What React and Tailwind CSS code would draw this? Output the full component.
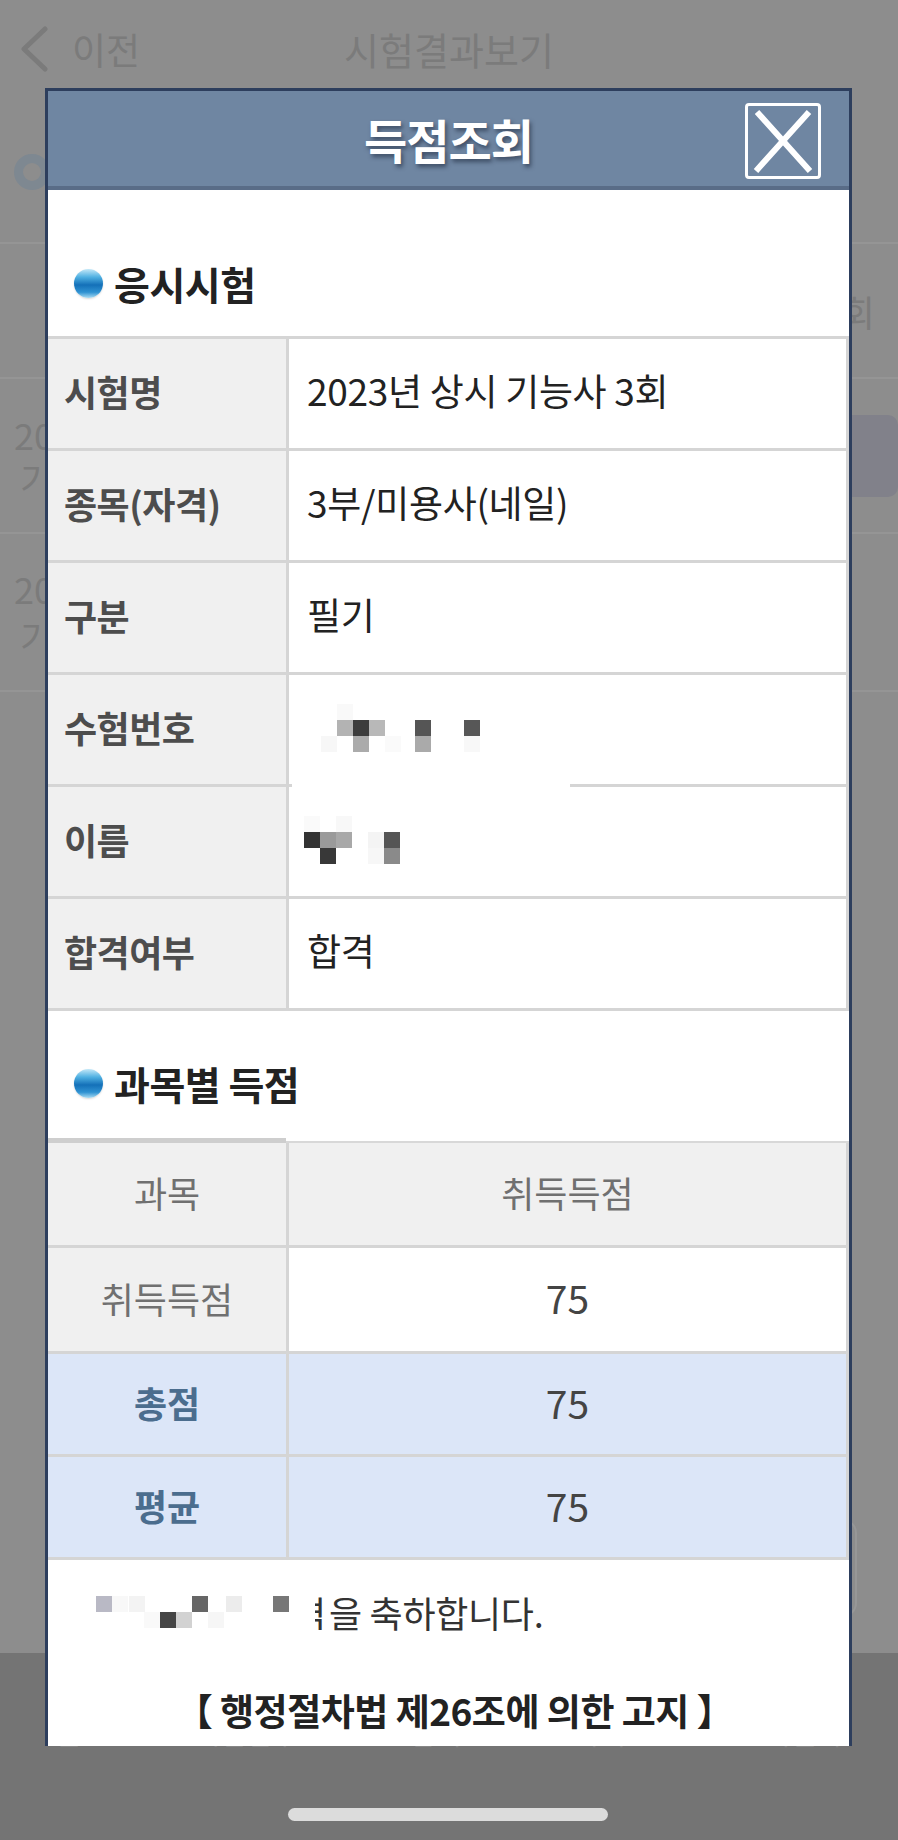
import React from 'react';

const examRows = [
  { label: '시험명', value: '2023년 상시 기능사 3회' },
  { label: '종목(자격)', value: '3부/미용사(네일)' },
  { label: '구분', value: '필기' },
  { label: '수험번호', mosaic: 'number' },
  { label: '이름', mosaic: 'name' },
  { label: '합격여부', value: '합격' },
];

// pixelated (blurred-out) personal info, [x, y, color]
const numberBlocks = [
  [48, 29, '#f9f9f9'], [48, 45, '#b3b3b3'], [64, 45, '#3c3c3c'], [80, 45, '#b8b8b8'],
  [32, 61, '#f7f7f7'], [64, 61, '#ababab'], [126, 45, '#555555'], [126, 61, '#aaaaaa'],
  [175, 45, '#575757'], [175, 61, '#f8f8f8'], [96, 61, '#fafafa'],
];
const nameBlocks = [
  [15, 29, '#fafafa'], [47, 29, '#f8f8f8'], [15, 45, '#333333'], [31, 45, '#9a9a9a'],
  [47, 45, '#a8a8a8'], [31, 61, '#383838'], [79, 45, '#f4f4f4'], [79, 61, '#f7f7f7'],
  [95, 45, '#555555'], [95, 61, '#8a8a8a'],
];
const congratsBlocks = [
  [0, 1, '#b9b9c5'], [16, 1, '#f8f8f8'], [33, 1, '#f3f3f3'], [96, 1, '#666666'],
  [130, 1, '#ececec'], [177, 1, '#777777'], [48, 17, '#f9f9f9'], [64, 17, '#454545'],
  [80, 17, '#d2d2d2'], [112, 17, '#f6f6f6'],
];

const Blocks = ({ blocks }) => (
  <>
    {blocks.map(([x, y, c], i) => (
      <span key={i} className="absolute w-[16px] h-[16px]" style={{ left: x, top: y, background: c }} />
    ))}
  </>
);

const Bullet = () => (
  <span className="w-[29px] h-[29px] rounded-full shrink-0 bg-[linear-gradient(180deg,#c4e8f8_0%,#4fb0e2_28%,#1470b8_55%,#2f92d2_80%,#aadcf3_100%)] shadow-[0_1px_2px_rgba(0,0,0,0.15)]" />
);

const SectionTitle = ({ children }) => (
  <div className="flex items-center gap-[11px] pl-[26px] h-[42px]">
    <Bullet />
    <span className="text-[39px] font-bold text-[#222] leading-none tracking-[-0.5px]">{children}</span>
  </div>
);

const scoreRows = [
  { label: '취득득점', value: '75', h: 'h-[106px]', blue: false },
  { label: '총점', value: '75', h: 'h-[103px]', blue: true },
  { label: '평균', value: '75', h: 'h-[103px]', blue: true },
];

export default function App() {
  return (
    <div className="relative w-[898px] h-[1840px] overflow-hidden bg-[#8d8d8d] font-['Noto_Sans_CJK_KR','Noto_Sans',sans-serif]">
      {/* dimmed page behind the popup */}
      <div className="flex flex-col h-full">
        <div className="grid grid-cols-[1fr_auto_1fr] items-center h-[98px]">
          <div className="flex items-center gap-[24px] pl-[20px]">
            <svg width="28" height="46" viewBox="0 0 28 46" fill="none">
              <path d="M25 3 L4 23 L25 43" stroke="#7b7b7b" strokeWidth="5" strokeLinecap="round" strokeLinejoin="round" />
            </svg>
            <span className="text-[37px] text-[#7b7b7b] leading-none">이전</span>
          </div>
          <span className="text-[38px] text-[#7b7b7b] leading-none">시험결과보기</span>
          <div />
        </div>
        <div className="h-[146px] border-b-2 border-[#959595] pt-[56px] pl-[14px]">
          <div className="w-[36px] h-[36px] rounded-full border-[9px] border-[#7e8891]" />
        </div>
        <div className="h-[135px] border-b-2 border-[#959595] flex items-center justify-end pr-[23px]">
          <span className="text-[36px] text-[#7b7b7b]">3회</span>
        </div>
        <div className="h-[155px] border-b-2 border-[#959595] flex items-center justify-between pl-[14px]">
          <div className="flex flex-col leading-none text-[#7b7b7b] text-[36px] gap-[8px]">
            <span>2023년 상시 기능사 3회</span>
            <span className="pl-[6px]">기능사</span>
          </div>
          <div className="w-[110px] h-[82px] rounded-[10px] bg-[#81818a]" />
        </div>
        <div className="h-[158px] border-b-2 border-[#959595] flex items-center pl-[14px]">
          <div className="flex flex-col leading-none text-[#7b7b7b] text-[36px] gap-[12px]">
            <span>2023년 상시 기능사 3회</span>
            <span className="pl-[6px]">기능사</span>
          </div>
        </div>
        <div className="flex-1 flex items-end justify-end pr-[41px] pb-[36px]">
          <div className="w-[100px] h-[98px] rounded-[14px] border-2 border-[#979797]" />
        </div>
        <div className="h-[187px] bg-[#747474] flex justify-around pt-[66px] text-[28px] text-[#868686] leading-none">
          <span>홈</span>
          <span>시험접수</span>
          <span>합격</span>
          <span>자격</span>
          <span>고객센터</span>
        </div>
      </div>

      {/* popup */}
      <div className="absolute left-[45px] top-[88px] w-[807px] h-[1658px] overflow-hidden border-x-[3px] border-t-[3px] border-[#2d3e5d] bg-white flex flex-col">
        <div className="relative h-[99px] shrink-0 bg-[#6f86a2] border-b-[4px] border-[#596c87] flex items-center justify-center">
          <span className="text-[47px] font-bold text-white leading-none tracking-[-1px] [text-shadow:2px_3px_4px_rgba(20,30,50,0.55)]">득점조회</span>
          <button type="button" className="absolute right-[28px] top-[12px] w-[76px] h-[76px] border-[3px] border-white rounded-[4px]">
            <svg width="70" height="70" viewBox="0 0 70 70">
              <path d="M9 6 L62 65 M61 6 L8 65" stroke="#fff" strokeWidth="6" />
            </svg>
          </button>
        </div>

        {/* 응시시험 */}
        <div className="h-[146px] pt-[40px] flex items-center shrink-0">
          <SectionTitle>응시시험</SectionTitle>
        </div>
        <div className="border-t-[3px] border-r-[3px] border-[#d5d5d5] shrink-0">
          {examRows.map((row) => (
            <div key={row.label} className="flex h-[112px] border-b-[3px] border-[#d5d5d5]">
              <div className="w-[241px] shrink-0 bg-[#f0f0f0] border-r-[3px] border-[#d5d5d5] flex items-center pl-[16px] pb-[6px] text-[36px] font-bold text-[#4d4d4d] tracking-[-0.5px]">
                {row.label}
              </div>
              <div className="relative flex-1 flex items-center pl-[18px] pb-[6px] text-[37px] text-[#222] tracking-[-0.3px]">
                {row.value}
                {row.mosaic === 'number' && <Blocks blocks={numberBlocks} />}
                {row.mosaic === 'name' && (
                  <>
                    <span className="absolute left-[3px] top-[-3px] w-[278px] h-[3px] bg-white" />
                    <Blocks blocks={nameBlocks} />
                  </>
                )}
              </div>
            </div>
          ))}
        </div>

        {/* 과목별 득점 */}
        <div className="h-[127px] pt-[17px] flex items-center shrink-0">
          <SectionTitle>과목별 득점</SectionTitle>
        </div>
        <div className="flex h-[5px] shrink-0">
          <div className="w-[238px] bg-[#cecece]" />
          <div className="flex-1 flex items-end">
            <div className="w-full h-[2px] bg-[#d8d8d8]" />
          </div>
        </div>
        <div className="border-r-[3px] border-[#d5d5d5] shrink-0 text-[36px] leading-none">
          <div className="flex h-[105px] border-b-[3px] border-[#d5d5d5] bg-[#f0f0f0] text-[#707070]">
            <div className="w-[241px] shrink-0 border-r-[3px] border-[#d5d5d5] flex items-center justify-center pb-[4px]">과목</div>
            <div className="flex-1 flex items-center justify-center pb-[4px]">취득득점</div>
          </div>
          {scoreRows.map((row) => (
            <div key={row.label} className={`flex ${row.h} border-b-[3px] border-[#d5d5d5] ${row.blue ? 'bg-[#dce6f8]' : 'bg-white'}`}>
              <div
                className={`w-[241px] shrink-0 border-r-[3px] border-[#d5d5d5] flex items-center justify-center pb-[4px] ${row.blue ? 'font-bold text-[#4b6d8e]' : 'bg-[#f0f0f0] text-[#707070]'}`}
              >
                {row.label}
              </div>
              <div className="flex-1 flex items-center justify-center pb-[4px] text-[39px] text-[#444]">{row.value}</div>
            </div>
          ))}
        </div>

        <div className="flex flex-col shrink-0">
          <div className="flex items-center h-[36px] mt-[34px] pl-[48px]">
            <div className="relative w-[219px] h-[34px] shrink-0">
              <Blocks blocks={congratsBlocks} />
            </div>
            <span className="inline-block w-[14px] overflow-hidden text-[36px] text-[#333] leading-none">
              <span className="inline-block -ml-[22px]">격</span>
            </span>
            <span className="text-[36px] text-[#333] leading-none tracking-[-0.3px]">을 축하합니다.</span>
          </div>
          <div className="mt-[59px] h-[42px] flex items-center justify-center text-[37px] font-bold text-[#222] leading-none pl-[12px] tracking-[-0.5px]">
            【 행정절차법 제26조에 의한 고지 】
          </div>
        </div>
      </div>

      {/* home indicator */}
      <div className="absolute left-[288px] bottom-[19px] w-[320px] h-[13px] rounded-full bg-[#dcdcdc]" />
    </div>
  );
}
